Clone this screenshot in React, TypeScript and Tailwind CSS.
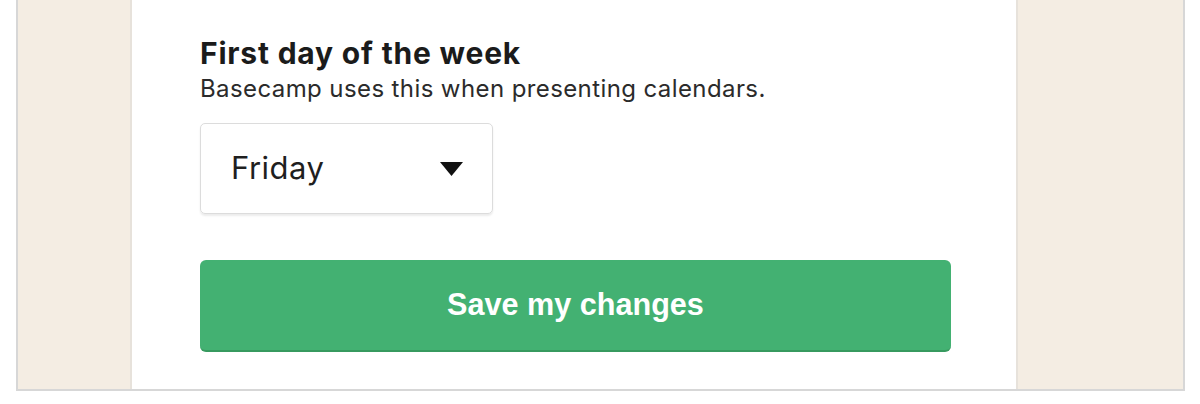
export default function App() {
  return (
    <div className="w-[1200px] h-[404px] bg-white pl-4 font-['Inter',sans-serif]">
      <div className="w-[1169px] h-[391px] border-2 border-t-0 border-[#d7d7d7] bg-[#f4ede3] pl-[112px]">
        <div className="w-[888px] h-full bg-white border-x-2 border-[#e7e2db] pl-[68px] pt-[37px]">
          <h3 className="text-[30px] leading-[32px] font-bold tracking-[0.8px] text-[#1b1b1b]">
            First day of the week
          </h3>
          <p className="mt-[6px] text-[24px] leading-[28px] tracking-[0.4px] text-[#2b2b2b]">
            Basecamp uses this when presenting calendars.
          </p>
          <div className="mt-[20px] w-[293px] h-[91px] rounded-[5px] border border-[#dcdcdc] shadow-[0_2px_2px_rgba(0,0,0,0.08)] flex items-center justify-between pl-[30px] pr-[29px]">
            <span className="text-[31px] tracking-[0.5px] text-[#1f1f1f]">Friday</span>
            <svg width="23" height="14" viewBox="0 0 23 14">
              <polygon points="0,0 23,0 11.5,14" fill="#111" />
            </svg>
          </div>
          <button
            type="button"
            className="mt-[46px] w-[751px] h-[92px] rounded-[6px] bg-[#43b172] border-b-2 border-[#379a5f] text-white text-[30.6px] font-bold font-['Liberation_Sans',sans-serif]"
          >
            Save my changes
          </button>
        </div>
      </div>
    </div>
  )
}
